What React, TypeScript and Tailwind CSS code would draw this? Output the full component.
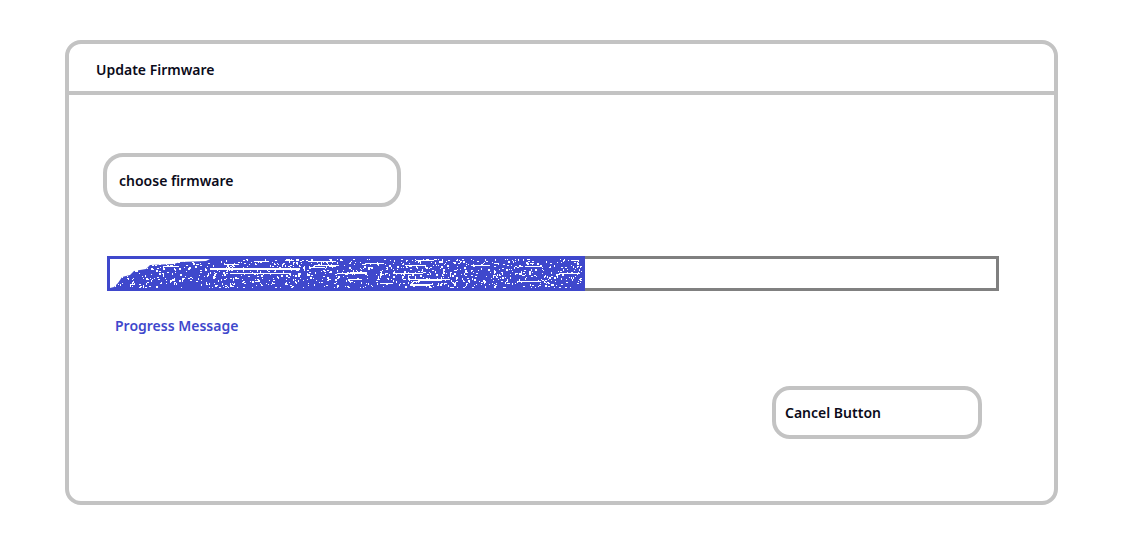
import React from "react"

// seeded random so the scribble fill is stable between renders
function makeRand(seed: number) {
	let s = seed
	return () => {
		s = (s * 1103515245 + 12345) % 2147483648
		return s / 2147483648
	}
}

function ScribbleFill() {
	const rand = makeRand(7)
	const w = 472
	const h = 29
	const dots: React.ReactNode[] = []
	for (let i = 0; i < 1100; i++) {
		const x = Math.floor(rand() * w)
		const y = Math.floor(rand() * h)
		const dw = rand() < 0.35 ? 2 : 1
		dots.push(<rect key={"d" + i} x={x} y={y} width={dw} height={rand() < 0.3 ? 2 : 1} fill="#fff" />)
	}
	const streaks: React.ReactNode[] = []
	for (let i = 0; i < 30; i++) {
		const x = Math.floor(rand() * w)
		const y = Math.floor(rand() * h)
		const len = 4 + Math.floor(rand() * 24)
		streaks.push(<rect key={"s" + i} x={x} y={y} width={len} height={1} fill="#fff" />)
	}
	return (
		<svg width={w} height={h} viewBox={`0 0 ${w} ${h}`} className="block">
			<rect width={w} height={h} fill="#3f48cc" />
			{dots}
			{streaks}
			{/* lighter start of the scribble */}
			<path d="M0 0 H100 L96 2 L70 3 L64 5 L40 6 L36 10 L24 12 L20 16 L12 18 L8 24 L4 28 L0 29 Z" fill="#fff" />
			<rect x={100} y={9} width={90} height={2} fill="#fff" />
			<rect x={120} y={14} width={60} height={1} fill="#fff" />
			<rect x={300} y={20} width={40} height={1} fill="#fff" />
			<rect x={300} y={25} width={20} height={2} fill="#fff" />
		</svg>
	)
}

export default function App() {
	return (
		<div
			className="h-[554px] w-[1145px] bg-white pl-[65px] pt-[40px]"
			style={{ fontFamily: '"Noto Sans", "Open Sans", sans-serif' }}
		>
			<div className="flex h-[465px] w-[993px] flex-col rounded-[16px] border-4 border-[#c3c3c3]">
				<div className="h-[51px] border-b-4 border-[#c3c3c3] pl-[27px] pt-[15px] text-[14px] font-semibold text-[#0b0b1a]">
					Update Firmware
				</div>
				<div className="flex flex-1 flex-col pl-[34px] pt-[58px]">
					<div className="flex h-[54px] w-[298px] items-center rounded-[20px] border-4 border-[#c3c3c3] pl-[12px] text-[14px] font-semibold text-[#0b0b1a]">
						choose firmware
					</div>
					<div className="ml-[4px] mt-[49px] flex h-[35px] w-[892px] border-[3px] border-[#808080]">
						<div className="-my-[3px] -ml-[3px] h-[35px] w-[478px] border-[3px] border-[#3f48cc]">
							<ScribbleFill />
						</div>
					</div>
					<div className="ml-[12px] mt-[24px] text-[14px] font-semibold text-[#3f48cc]">
						Progress Message
					</div>
					<div className="ml-[669px] mt-[50px] flex h-[53px] w-[210px] items-center rounded-[18px] border-4 border-[#c3c3c3] pl-[9px] text-[14px] font-semibold text-[#0b0b1a]">
						Cancel Button
					</div>
				</div>
			</div>
		</div>
	)
}
